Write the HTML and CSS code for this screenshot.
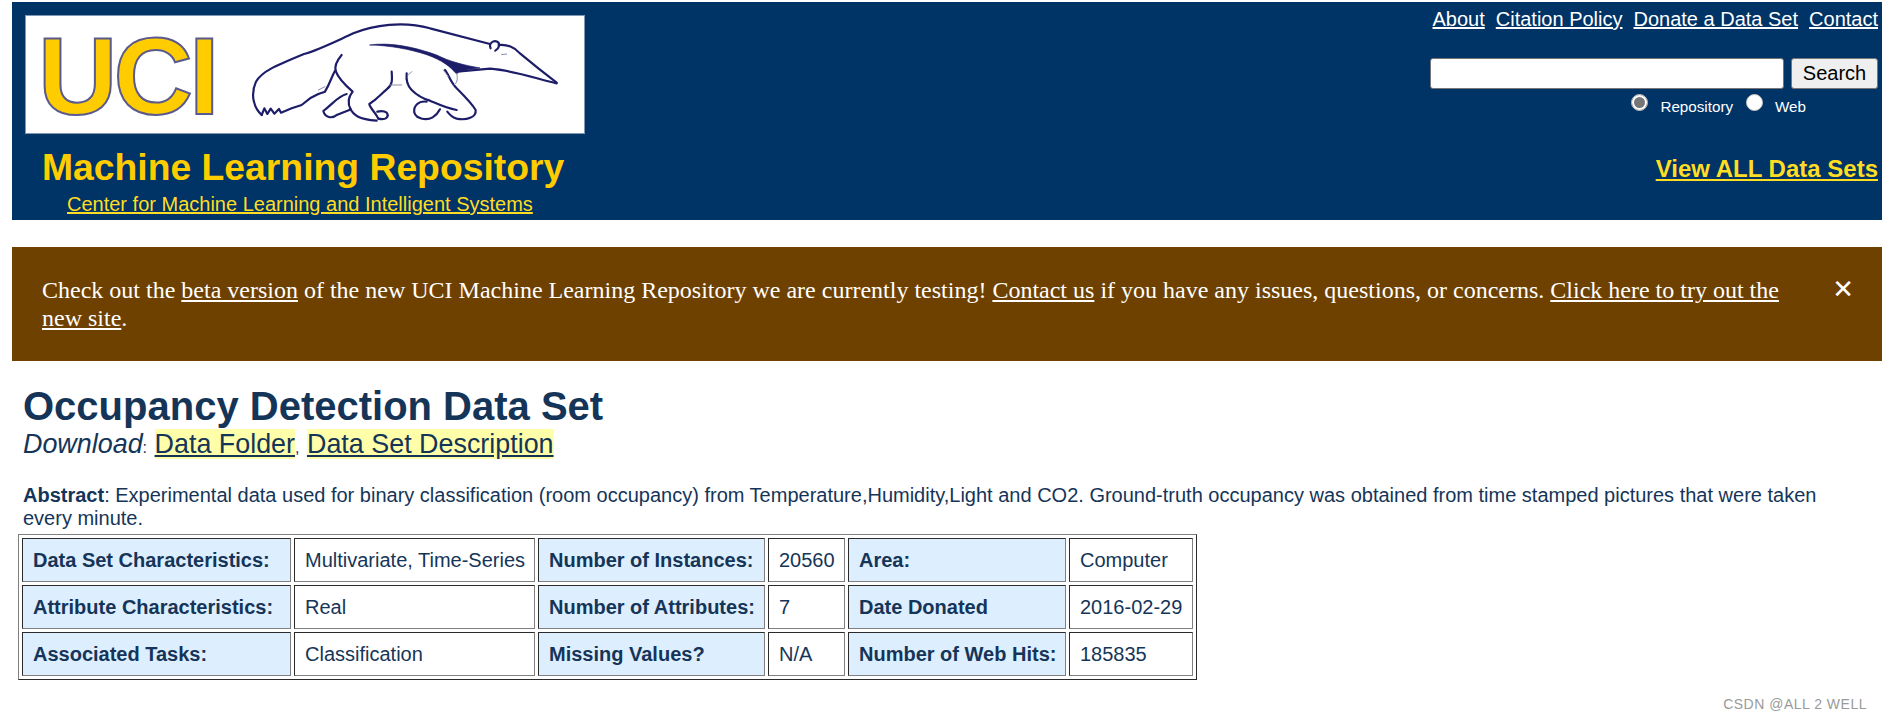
FILE: index.html
```html
<!DOCTYPE html>
<html lang="en">
<head>
<meta charset="utf-8">
<title>UCI Machine Learning Repository: Occupancy Detection Data Set</title>
<link rel="stylesheet" href="styles.css">
</head>
<body>
<header class="masthead">
  <div class="brand">
    <svg class="logo" viewBox="0 0 560 119" width="560" height="119" aria-label="UCI anteater logo">
      <defs><filter id="soft"><feGaussianBlur stdDeviation="0.5"/></filter></defs>
      <text class="uci" x="13" y="99">UCI</text>
      <g transform="translate(205 15) scale(.3333)" filter="url(#soft)" class="beast">
        <path d="M95 255C72 235 60 195 78 155C95 125 130 110 222 72C260 62 300 42 370 10C430 -15 520 -28 600 -5L780 42"/>
        <path d="M782 55C775 40 790 30 802 35C812 40 808 55 796 62"/>
        <path d="M806 45C830 42 855 52 870 70C900 95 950 135 980 158"/>
        <path d="M980 160C930 150 860 122 780 116L690 124"/>
        <path class="mark" d="M420 45C480 36 550 50 620 75C660 95 700 105 750 114C715 118 690 122 680 132C660 110 640 92 590 74C540 58 480 46 420 45Z"/>
        <path class="thin" d="M815 74L830 72"/>
        <path d="M645 120C655 130 660 155 680 175C700 195 725 220 737 240C740 262 710 272 680 266C665 262 660 255 652 245"/>
        <path class="thin" d="M680 130C685 150 680 160 672 165"/>
        <path d="M530 130C528 150 530 165 545 180C560 195 575 205 600 212C630 225 650 235 680 240"/>
        <path d="M590 215C565 212 550 228 553 248C560 268 590 272 608 262C620 255 625 248 630 238"/>
        <path d="M485 125C487 150 488 165 470 178C450 195 445 205 418 222C420 235 435 245 445 266"/>
        <path d="M445 266C470 272 478 258 470 248C462 242 450 243 442 245"/>
        <path d="M360 235C370 255 385 268 440 272"/>
        <path d="M335 75C318 95 312 110 318 125C325 145 345 165 368 185C352 205 355 225 362 238"/>
        <path d="M350 192C325 198 310 220 280 243C285 262 305 268 322 254L358 240"/>
        <path d="M95 255L103 235L112 252L122 236L133 251L147 237L153 248L185 235L215 225L240 205L265 192L285 185C300 160 305 140 315 122"/>
        <path class="thin" d="M515 165H480"/>
        <path class="thin" d="M265 180L285 170M640 120L655 140M545 125L535 135"/>
      </g>
    </svg>
    <div class="repo-title">Machine Learning Repository</div>
    <a class="center-link" href="#">Center for Machine Learning and Intelligent Systems</a>
  </div>
  <div class="tools">
    <nav class="top-nav">
      <a href="#">About</a>
      <a href="#">Citation Policy</a>
      <a href="#">Donate a Data Set</a>
      <a href="#">Contact</a>
    </nav>
    <form class="search-row">
      <input class="search-input" type="text" aria-label="Search">
      <button class="search-btn" type="button">Search</button>
    </form>
    <div class="scope-row">
      <input class="scope-radio" type="radio" name="scope" checked aria-label="Repository">
      <span class="scope-label">Repository</span>
      <input class="scope-radio" type="radio" name="scope" aria-label="Web">
      <span class="scope-label">Web</span>
    </div>
    <a class="view-all" href="#">View ALL Data Sets</a>
  </div>
</header>

<section class="banner">
  <p class="banner-text">Check out the <a href="#">beta version</a> of the new UCI Machine Learning Repository we are currently testing! <a href="#">Contact us</a> if you have any issues, questions, or concerns. <a href="#">Click here to try out the new site</a>.</p>
  <span class="banner-close">&#10005;</span>
</section>

<main class="content">
  <h1 class="title">Occupancy Detection Data Set</h1>
  <p class="download"><i>Download</i><span class="small">:</span> <a href="#">Data Folder</a><span class="small">,</span> <a href="#">Data Set Description</a></p>
  <p class="abstract"><b>Abstract</b>: Experimental data used for binary classification (room occupancy) from Temperature,Humidity,Light and CO2. Ground-truth occupancy was obtained from time stamped pictures that were taken every minute.</p>
  <table class="facts">
    <colgroup>
      <col class="c1"><col class="c2"><col class="c3"><col class="c4"><col class="c5"><col class="c6">
    </colgroup>
    <tr>
      <th>Data Set Characteristics:</th><td>Multivariate, Time-Series</td>
      <th>Number of Instances:</th><td>20560</td>
      <th>Area:</th><td>Computer</td>
    </tr>
    <tr>
      <th>Attribute Characteristics:</th><td>Real</td>
      <th>Number of Attributes:</th><td>7</td>
      <th>Date Donated</th><td>2016-02-29</td>
    </tr>
    <tr>
      <th>Associated Tasks:</th><td>Classification</td>
      <th>Missing Values?</th><td>N/A</td>
      <th>Number of Web Hits:</th><td>185835</td>
    </tr>
  </table>
</main>
<div class="watermark">CSDN @ALL 2 WELL</div>
</body>
</html>
```

FILE: styles.css
```css
html, body { height: 100%; }
body {
  margin: 0;
  padding: 2px 0 0 12px;
  box-sizing: border-box;
  overflow: hidden;
  position: relative;
  background: #fff;
  color: #153558;
  font-family: "Liberation Sans", Arial, sans-serif;
  font-size: 20px;
}
.masthead {
  display: flex;
  justify-content: space-between;
  height: 218px;
  background: #003366;
}
.brand {
  display: flex;
  flex-direction: column;
  align-items: flex-start;
  padding: 13px 0 0 13px;
}
.logo {
  display: block;
  overflow: visible;
  background: #fff;
  box-shadow: inset 0 0 0 1px #7f99b3;
}
.uci {
  font-family: "Liberation Sans", Arial, sans-serif;
  font-weight: 700;
  font-size: 110px;
  letter-spacing: -4px;
  fill: #ffcc00;
  stroke: #5a5a8c;
  stroke-width: 2px;
}
.beast path {
  fill: none;
  stroke: #1c1c68;
  stroke-width: 6.5;
  stroke-linecap: round;
  stroke-linejoin: round;
}
.beast path.thin { stroke-width: 3; stroke: #8a8ab0; }
.beast path.mark { fill: #1c1c68; stroke-width: 2; }
.repo-title {
  margin: 10px 0 0 17px;
  color: #ffcc00;
  font-weight: 700;
  font-size: 37.3px;
  line-height: 46px;
  white-space: nowrap;
}
.center-link {
  margin: 2px 0 0 42px;
  color: #ffdd22;
  font-size: 20px;
  line-height: 24px;
  white-space: nowrap;
}
.tools {
  display: flex;
  flex-direction: column;
  align-items: flex-end;
  padding: 4px 4px 0 0;
}
.top-nav {
  display: flex;
  gap: 11px;
  line-height: 26px;
}
.top-nav a { color: #fff; }
.search-row {
  display: flex;
  gap: 7px;
  margin: 26px 0 0;
}
.search-input {
  box-sizing: border-box;
  width: 354px;
  height: 31px;
  margin: 0;
  padding: 0 4px;
  background: #fff;
  border: 1px solid #767676;
  border-radius: 3px;
}
.search-btn {
  box-sizing: border-box;
  width: 87px;
  height: 31px;
  padding: 0;
  background: #efefef;
  border: 1px solid #767676;
  border-radius: 3px;
  color: #000;
  font-family: inherit;
  font-size: 20px;
}
.scope-row {
  display: flex;
  align-items: flex-start;
  align-self: flex-end;
  margin: 3px 72px 0 0;
  height: 27px;
  color: #fff;
  font-size: 15.2px;
}
.scope-radio {
  appearance: none;
  box-sizing: border-box;
  width: 17px;
  height: 17px;
  margin: 2px 12px 0 0;
  background: #fff;
  border: 1px solid #c4c4c4;
  border-radius: 50%;
}
.scope-radio:checked {
  background: #767676;
  box-shadow: inset 0 0 0 2px #fff;
}
.scope-label { line-height: 20px; margin: 5px 13px 0 0; }
.scope-label:last-child { margin-right: 0; }
.view-all {
  margin-top: 35px;
  color: #ffdd22;
  font-weight: 700;
  font-size: 24px;
  line-height: 30px;
}
.banner {
  display: flex;
  justify-content: space-between;
  align-items: flex-start;
  box-sizing: border-box;
  height: 114px;
  margin-top: 27px;
  padding: 29px 28px 0 30px;
  background: #6e4100;
  color: #fff;
  font-family: "Liberation Serif", "Times New Roman", serif;
  font-size: 24px;
}
.banner-text { margin: 0; width: 1750px; line-height: 28px; }
.banner-text a { color: #fff; }
.banner-close { font-family: "DejaVu Sans", sans-serif; font-size: 26px; line-height: 26px; }
.content { padding: 22px 0 0 11px; }
.title {
  margin: 0;
  font-size: 40px;
  line-height: 46px;
  font-weight: 700;
}
.download {
  margin: 0;
  font-size: 26.9px;
  line-height: 31px;
}
.download .small { font-size: 16px; }
.download a { color: #153558; background: #ffffaa; }
.abstract {
  margin: 21px 30px 0 0;
  line-height: 23px;
}
.facts {
  margin: 4px 0 0 -5px;
  width: 1179px;
  table-layout: fixed;
  border-collapse: separate;
  border-spacing: 3px;
  border: 1px solid;
  border-color: #808080 #2b2b2b #2b2b2b #808080;
}
.c1 { width: 269px; }
.c2 { width: 241px; }
.c3 { width: 227px; }
.c4 { width: 77px; }
.c5 { width: 218px; }
.c6 { width: 124px; }
.facts th, .facts td {
  box-sizing: border-box;
  height: 44px;
  padding: 0 0 0 10px;
  text-align: left;
  white-space: nowrap;
  border: 1px solid;
  border-color: #2b2b2b #808080 #808080 #2b2b2b;
}
.facts th { background: #ddeeff; }
.watermark {
  position: absolute;
  right: 15px;
  bottom: 7px;
  color: #9a9a9a;
  font-size: 14px;
  letter-spacing: .5px;
}
```
